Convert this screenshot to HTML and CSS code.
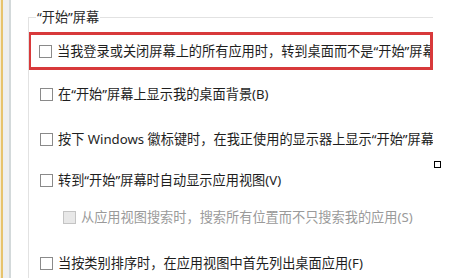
FILE: index.html
```html
<!DOCTYPE html>
<html lang="zh-CN">
<head>
<meta charset="utf-8">
<title>开始屏幕设置</title>
<link rel="stylesheet" href="styles.css">
</head>
<body>
<div class="page">
  <div class="edge">
    <span class="edge-light"></span>
    <span class="edge-yellow"></span>
    <span class="edge-grey"></span>
    <span class="edge-line"></span>
  </div>
  <div class="main">
    <fieldset class="group">
      <legend class="group-title">“开始”屏幕</legend>
      <div class="highlight">
        <label class="row"><span class="box"></span><span class="text">当我登录或关闭屏幕上的所有应用时，转到桌面而不是“开始”屏幕</span></label>
      </div>
      <label class="row row-2"><span class="box"></span><span class="text">在“开始”屏幕上显示我的桌面背景(B)</span></label>
      <label class="row row-3"><span class="box"></span><span class="text">按下 Windows 徽标键时，在我正使用的显示器上显示“开始”屏幕</span></label>
      <label class="row row-4"><span class="box"></span><span class="text">转到“开始”屏幕时自动显示应用视图(V)</span></label>
      <label class="row row-5 sub disabled"><span class="box"></span><span class="text">从应用视图搜索时，搜索所有位置而不只搜索我的应用(S)</span></label>
      <label class="row row-6"><span class="box"></span><span class="text">当按类别排序时，在应用视图中首先列出桌面应用(F)</span></label>
    </fieldset>
  </div>
  <span class="handle"></span>
</div>
</body>
</html>
```

FILE: styles.css
```css
html, body {
  margin: 0;
  padding: 0;
  background: #ffffff;
}

body {
  width: 454px;
  height: 278px;
  overflow: hidden;
  font-family: "Noto Sans", "Noto Sans CJK SC", sans-serif;
  font-size: 13.2px;
  color: #1e1e1e;
}

.page {
  position: relative;
  display: flex;
  height: 278px;
}

.edge {
  display: flex;
  flex: none;
}

.edge-light { width: 1px; background: #f6ecd0; }
.edge-yellow { width: 2px; background: #e7c36c; }
.edge-grey { width: 6px; background: #eeefef; }
.edge-line { width: 2px; background: #d3d9da; }

.main {
  flex: none;
  width: 406px;
  padding-left: 17px;
}

.group {
  margin: 7px 0 0 0;
  padding: 0 0 0 0;
  border: 1px solid #e2e2e2;
  border-right: none;
  border-bottom: none;
  width: 405px;
  height: 280px;
  box-sizing: border-box;
  overflow: hidden;
  min-width: 0;
}

.group-title {
  margin-left: 7px;
  padding: 0 1px;
  line-height: 20px;
  color: #2a2a2a;
}

.highlight {
  margin: 5px 0 0 -1px;
  width: 405px;
  height: 38px;
  box-sizing: border-box;
  border: 3px solid #d8393b;
  display: flex;
  align-items: center;
  padding-left: 8px;
  overflow: hidden;
}

.row {
  display: flex;
  align-items: center;
  height: 20px;
  padding-left: 11px;
  white-space: nowrap;
  line-height: 20px;
}

.highlight .row {
  padding-left: 0;
}

.row-2 { margin-top: 14px; }
.row-3 { margin-top: 25px; }
.row-4 { margin-top: 21px; }
.row-5 { margin-top: 17px; }
.row-6 { margin-top: 26px; }

.sub {
  padding-left: 34px;
}

.box {
  flex: none;
  width: 13px;
  height: 13px;
  box-sizing: border-box;
  border: 1px solid #8a8a8a;
  background: #ffffff;
  margin-right: 5px;
}

.disabled {
  color: #9a9a9a;
}

.disabled .box {
  border-color: #c4c4c4;
  background: #e8e8e8;
}

.handle {
  position: absolute;
  left: 434px;
  top: 161px;
  width: 7px;
  height: 7px;
  box-sizing: border-box;
  border: 1px solid #000000;
  background: #ffffff;
}
```
